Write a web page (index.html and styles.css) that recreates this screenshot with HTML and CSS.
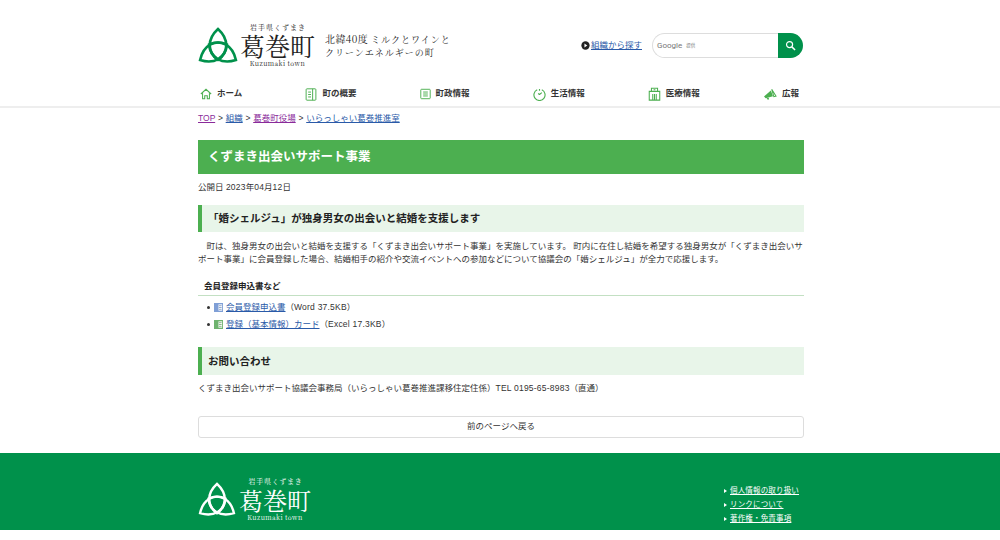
FILE: index.html
```html
<!DOCTYPE html>
<html lang="ja">
<head>
<meta charset="utf-8">
<title>くずまき出会いサポート事業</title>
<link rel="stylesheet" href="styles.css">
</head>
<body>
<svg width="0" height="0" class="defs" aria-hidden="true"><defs>
<g id="tri"><path id="lens" d="M20 2C9 12 9 25 20 33C31 25 31 12 20 2Z"/><path d="M20 2C9 12 9 25 20 33C31 25 31 12 20 2Z" transform="rotate(120 20 22.67)"/><path d="M20 2C9 12 9 25 20 33C31 25 31 12 20 2Z" transform="rotate(240 20 22.67)"/></g>
</defs></svg>
<header class="site-header">
  <div class="wrap head-top">
    <div class="logo">
      <svg class="logo-mark" viewBox="0 0 40 36"><use href="#tri" fill="none" stroke="#00914b" stroke-width="2.6"/></svg>
      <div class="logo-text">
        <div class="logo-sub">岩手県くずまき</div>
        <div class="logo-main">葛巻町</div>
        <div class="logo-en">Kuzumaki town</div>
      </div>
    </div>
    <div class="tagline">
      <div>北緯40度 <span class="tag-sm">ミルクとワインと</span></div>
      <div class="tag-sm">クリーンエネルギーの町</div>
    </div>
    <div class="search-area">
      <svg class="play" viewBox="0 0 10 10"><circle cx="5" cy="5" r="4.6" fill="#222"/><path d="M3.8 2.8L7 5L3.8 7.2Z" fill="#fff"/></svg>
      <a href="#" class="org-link">組織から探す</a>
      <div class="search">
        <div class="search-box"><span class="google">Google</span><span class="teikyo">提供</span></div>
        <div class="search-btn"><svg viewBox="0 0 12 12" width="11" height="11"><circle cx="5" cy="5" r="3.3" fill="none" stroke="#fff" stroke-width="1.3"/><path d="M7.5 7.5L11 11" stroke="#fff" stroke-width="1.6"/></svg></div>
      </div>
    </div>
  </div>
  <nav class="wrap gnav">
    <a href="#" class="gnav-item"><svg viewBox="0 0 14 14" width="12" height="12" class="ni"><path d="M1 7L7 1.5L13 7M3 6V12.5H5.5V9H8.5V12.5H11V6" /></svg>ホーム</a>
    <a href="#" class="gnav-item"><svg viewBox="0 0 14 16" width="12" height="13" class="ni"><rect x="1" y="1" width="12" height="14" rx="1"/><path d="M9 1V15M3.5 5H7M3.5 8H7M3.5 11H7"/></svg>町の概要</a>
    <a href="#" class="gnav-item"><svg viewBox="0 0 14 14" width="11" height="12" class="ni"><rect x="1" y="1" width="12" height="12" rx="1"/><path d="M4 4.5H10M4 7H10M4 9.5H10"/></svg>町政情報</a>
    <a href="#" class="gnav-item"><svg viewBox="0 0 14 14" width="13" height="13" class="ni"><path d="M4.5 2A6 6 0 1 0 9.5 2"/><path d="M7 1V3M7 7L9.5 5M7 7L5.5 6"/></svg>生活情報</a>
    <a href="#" class="gnav-item"><svg viewBox="0 0 14 16" width="13" height="14" class="ni"><path d="M1 15V5H3.5V1.5H10.5V5H13V15ZM3.5 5H10.5M5 8V15M7 8V15M9 8V15M6 3.2H8"/></svg>医療情報</a>
    <a href="#" class="gnav-item"><svg viewBox="0 0 16 14" width="14" height="12"><path d="M1 10L9 3L11.5 9.5L3 12Z" fill="#4caf50"/><path d="M10 1.5L15 9.5L12.5 10Z" fill="none" stroke="#4caf50" stroke-width="1.2"/><path d="M4 12L5 13.5H7L6.5 11.3Z" fill="#4caf50"/></svg>広報</a>
  </nav>
</header>
<main class="wrap content">
  <div class="crumbs"><a href="#" class="visited">TOP</a> &gt; <a href="#">組織</a> &gt; <a href="#" class="visited">葛巻町役場</a> &gt; <a href="#">いらっしゃい葛巻推進室</a></div>
  <h1 class="page-title">くずまき出会いサポート事業</h1>
  <p class="date">公開日 <span class="lat">2023</span>年<span class="lat">04</span>月<span class="lat">12</span>日</p>
  <h2 class="sec-title">「婚シェルジュ」が独身男女の出会いと結婚を支援します</h2>
  <p class="body-text">　町は、独身男女の出会いと結婚を支援する「くずまき出会いサポート事業」を実施しています。 町内に在住し結婚を希望する独身男女が「くずまき出会いサポート事業」に会員登録した場合、結婚相手の紹介や交流イベントへの参加などについて協議会の「婚シェルジュ」が全力で応援します。</p>
  <h3 class="sub-title">会員登録申込書など</h3>
  <ul class="files">
    <li><svg viewBox="0 0 10 10" width="9" height="9" class="fi"><rect width="10" height="10" fill="#7f9fd6"/><rect x="5" y="1.5" width="4" height="7" fill="#fff"/><path d="M5.5 3H8.5M5.5 5H8.5M5.5 7H8.5" stroke="#5577aa" stroke-width=".7"/></svg><a href="#">会員登録申込書</a><span>（<span class="lat">Word 37.5KB</span>）</span></li>
    <li><svg viewBox="0 0 10 10" width="9" height="9" class="fi"><rect width="10" height="10" fill="#6fb36f"/><rect x="5" y="1.5" width="4" height="7" fill="#fff"/><path d="M5.5 3H8.5M5.5 5H8.5M5.5 7H8.5" stroke="#4a8a4a" stroke-width=".7"/></svg><a href="#">登録（基本情報）カード</a><span>（<span class="lat">Excel 17.3KB</span>）</span></li>
  </ul>
  <h2 class="sec-title contact-title">お問い合わせ</h2>
  <p class="contact">くずまき出会いサポート協議会事務局（いらっしゃい葛巻推進課移住定住係）<span class="lat">TEL 0195-65-8983</span>（直通）</p>
  <a href="#" class="back">前のページへ戻る</a>
</main>
<footer class="site-footer">
  <div class="wrap foot-in">
    <div class="logo foot-logo">
      <svg class="logo-mark" viewBox="0 0 40 36"><use href="#tri" fill="none" stroke="#fff" stroke-width="2.6"/></svg>
      <div class="logo-text">
        <div class="logo-sub">岩手県くずまき</div>
        <div class="logo-main">葛巻町</div>
        <div class="logo-en">Kuzumaki town</div>
      </div>
    </div>
    <ul class="foot-links">
      <li><a href="#">個人情報の取り扱い</a></li>
      <li><a href="#">リンクについて</a></li>
      <li><a href="#">著作権・免責事項</a></li>
    </ul>
  </div>
</footer>
</body>
</html>
```
FILE: styles.css
```css
* { box-sizing: border-box; }
html, body { margin: 0; padding: 0; }
body { background: #fff; color: #333; font-family: "Liberation Sans", "Noto Sans CJK JP", sans-serif; font-size: 8.5px; line-height: 13.5px; height: 540px; overflow: hidden; }
a { color: #2a5aa8; }
a.visited { color: #8a2a9a; }
.lat { letter-spacing: .22px; }
.defs { position: absolute; }
.wrap { width: 606px; margin-left: 198px; }
.site-header { border-bottom: 2px solid #eee; height: 108px; }
.head-top { display: flex; align-items: flex-start; height: 81px; }
.logo { display: flex; align-items: flex-start; font-family: "Noto Serif CJK JP", "Liberation Serif", "Noto Sans CJK JP", serif; }
.logo-mark { width: 40px; height: 36px; margin-top: 27px; }
.logo-text { margin-left: 2px; margin-top: 22px; width: 75px; text-align: center; color: #222; white-space: nowrap; }
.logo-sub { font-size: 7px; line-height: 10px; letter-spacing: 1px; padding-left: 1px; }
.logo-main { font-size: 25px; line-height: 27px; }
.logo-en { font-size: 6.5px; line-height: 9px; letter-spacing: .4px; }
.tagline { margin-left: 10px; margin-top: 32px; font-family: "Noto Serif CJK JP", "Liberation Serif", "Noto Sans CJK JP", serif; font-size: 10px; line-height: 13px; color: #222; letter-spacing: .4px; }
.tag-sm { font-size: 9px; letter-spacing: 1px; }
.search-area { margin-left: auto; margin-right: 1px; margin-top: 33px; display: flex; align-items: center; height: 25px; }
.play { width: 9px; height: 9px; margin-right: 1px; }
.org-link { font-size: 8.5px; }
.search { display: flex; margin-left: 10px; width: 151px; height: 25px; }
.search-box { flex: 1; border: 1px solid #ddd; border-right: 0; border-radius: 13px 0 0 13px; display: flex; align-items: center; padding-left: 4px; }
.google { font-family: Roboto, "Liberation Sans", sans-serif; font-size: 8px; color: #777; }
.teikyo { font-size: 4.5px; color: #777; margin-left: 4px; }
.search-btn { width: 25px; background: #00914b; border-radius: 0 13px 13px 0; display: flex; align-items: center; justify-content: center; }
.gnav { display: flex; justify-content: space-between; padding: 0 5px 0 2px; height: 26px; align-items: center; }
.gnav-item { display: flex; align-items: center; gap: 5px; color: #333; font-size: 8.5px; font-weight: bold; text-decoration: none; }
.ni { fill: none; stroke: #4caf50; stroke-width: 1.2; }
.crumbs { margin-top: 3px; height: 14px; line-height: 14px; color: #333; word-spacing: .4px; }
.page-title { margin: 15px 0 0; height: 34px; background: #4caf50; color: #fff; font-size: 12.5px; line-height: 34px; padding-left: 10px; font-weight: bold; }
.date { margin: 7px 0 0; line-height: 13px; }
.sec-title { margin: 11px 0 0; height: 27px; background: #e8f5e9; border-left: 4px solid #4caf50; padding-left: 6px; font-size: 10.5px; line-height: 27px; color: #222; font-weight: bold; }
.body-text { margin: 8px 0 0; line-height: 13px; }
.sub-title { margin: 13px 0 0; height: 17px; padding-left: 6px; font-size: 8.5px; line-height: 14px; font-weight: bold; color: #222; border-bottom: 1px solid #c3e0c3; }
.files { list-style: none; margin: 3px 0 0; padding: 0 0 0 8px; }
.files li { line-height: 17px; position: relative; padding-left: 8px; display: flex; align-items: center; }
.files li::before { content: ""; position: absolute; left: 1px; top: 7px; width: 3px; height: 3px; border-radius: 50%; background: #333; }
.fi { margin-right: 3px; }
.contact-title { margin-top: 14px; height: 28px; line-height: 28px; }
.contact { margin: 7px 0 0; }
.back { display: block; margin-top: 20px; height: 22px; border: 1px solid #ddd; border-radius: 3px; text-align: center; line-height: 19px; color: #333; text-decoration: none; }
.site-footer { margin-top: 15px; height: 77px; background: #00914b; color: #fff; }
.foot-in { display: flex; justify-content: space-between; }
.foot-logo .logo-mark { margin-top: 29px; width: 38px; height: 34px; }
.foot-logo .logo-text { color: #fff; margin-top: 23px; margin-left: 3px; width: 72px; }
.foot-logo .logo-main { font-size: 24px; }
.foot-logo .logo-sub { letter-spacing: .7px; }
.foot-links { list-style: none; margin: 31px 5px 0 0; padding: 0; white-space: nowrap; width: 75px; }
.foot-links li { line-height: 14px; font-size: 7.5px; padding-left: 6px; position: relative; letter-spacing: .17px; }
.foot-links li::before { content: ""; position: absolute; left: 0; top: 5px; border-left: 3px solid #fff; border-top: 2px solid transparent; border-bottom: 2px solid transparent; }
.foot-links a { color: #fff; }
```
